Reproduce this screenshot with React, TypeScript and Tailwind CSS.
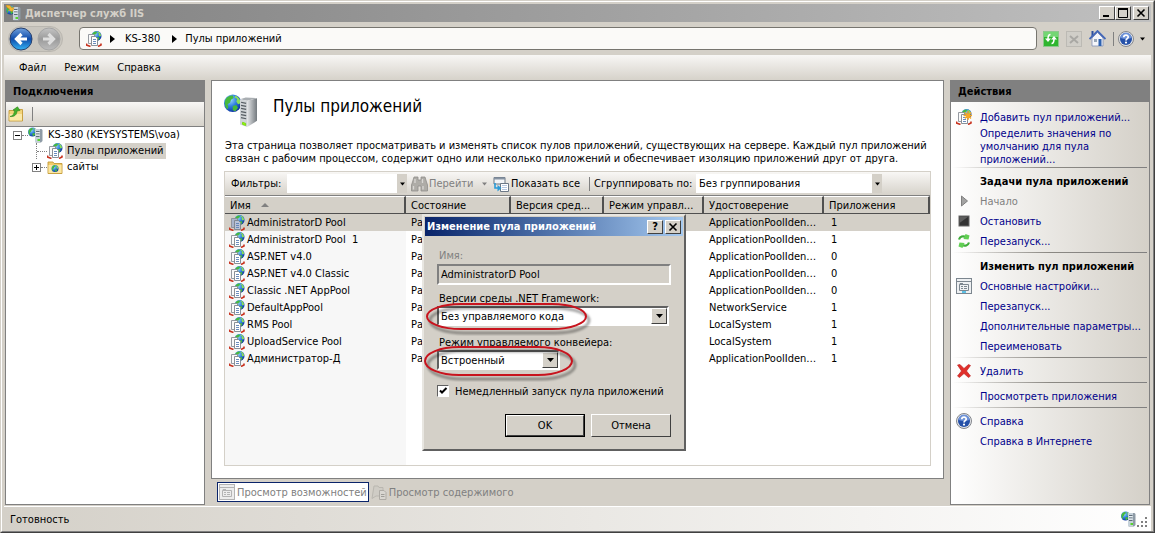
import { useId, useState } from "react";
import type { ReactNode } from "react";

const POOLS = [
  { name: "AdministratorD Pool", state: "Работает", identity: "ApplicationPoolIdentity", apps: 1 },
  { name: "AdministratorD Pool  1", state: "Работает", identity: "ApplicationPoolIdentity", apps: 1 },
  { name: "ASP.NET v4.0", state: "Работает", identity: "ApplicationPoolIdentity", apps: 0 },
  { name: "ASP.NET v4.0 Classic", state: "Работает", identity: "ApplicationPoolIdentity", apps: 0 },
  { name: "Classic .NET AppPool", state: "Работает", identity: "ApplicationPoolIdentity", apps: 0 },
  { name: "DefaultAppPool", state: "Работает", identity: "NetworkService", apps: 1 },
  { name: "RMS Pool", state: "Работает", identity: "LocalSystem", apps: 1 },
  { name: "UploadService Pool", state: "Работает", identity: "LocalSystem", apps: 1 },
  { name: "Администратор-Д", state: "Работает", identity: "ApplicationPoolIdentity", apps: 1 },
];

const COLUMNS = [
  { label: "Имя", width: "w-[181px]" },
  { label: "Состояние", width: "w-[105px]" },
  { label: "Версия сред...", width: "w-[93px]" },
  { label: "Режим управл...", width: "w-[100px]" },
  { label: "Удостоверение", width: "w-[120px]" },
  { label: "Приложения", width: "" },
];

/* ---------- icons ---------- */

function Globe({ cx, cy, r }: { cx: number; cy: number; r: number }) {
  const id = useId();
  return (
    <g>
      <radialGradient id={id} cx="35%" cy="30%" r="75%">
        <stop offset="0" stopColor="#9fdcff" />
        <stop offset="0.5" stopColor="#2f7fe0" />
        <stop offset="1" stopColor="#0b2f9c" />
      </radialGradient>
      <circle cx={cx} cy={cy} r={r} fill={`url(#${id})`} />
      <g transform={`translate(${cx} ${cy}) scale(${r / 10})`} fill="#46b93c">
        <path d="M-8-5C-6-8-3-9 0-9L1-6-2-4-3-1-6 1-5 4-6 7C-9 4-10-1-8-5Z" />
        <path d="M3-9C7-7 9-4 9 0L6 1 4-2 5-5 2-7Z" fill="#8ade5a" />
        <path d="M0 3 4 2 6 5 3 9 0 8Z" />
      </g>
    </g>
  );
}

function LargeServerIcon() {
  const id = useId();
  return (
    <svg width="33" height="33" viewBox="0 0 32 32" aria-hidden="true" className="shrink-0">
      <linearGradient id={id}>
        <stop offset="0" stopColor="#e3e5e7" />
        <stop offset="1" stopColor="#73797e" />
      </linearGradient>
      <Globe cx={8.500} cy={9} r={8.500} />
      <path d="M15.500 5 21 3.500 32 4 22.500 6.500Z" fill="#a9aeb2" />
      <path d="M22.500 6.500 32 4V26L22.500 32Z" fill={`url(#${id})`} />
      <path d="M15.500 5 22.500 6.500V32L15.500 29.500Z" fill="#d0d4d7" />
      <path d="M16.500 8 21.500 9M16.500 11 21.500 12M16.500 14 21.500 15M16.500 17 21.500 18M16.500 20 21.500 21M16.500 23 21.500 24" stroke="#565d63" strokeWidth="1.200" />
      <path d="M18 27.500 21 28.500V30.500L18 29.500Z" fill="#9dff10" stroke="#6fd400" strokeWidth="0.800" />
    </svg>
  );
}

function ServerIcon({ arrow = false }: { arrow?: boolean }) {
  return (
    <svg width="16" height="16" viewBox="0 0 16 16" aria-hidden="true" className="shrink-0">
      <Globe cx={4.500} cy={5} r={4.500} />
      <path d="M7 2H13.500L14.500 3V14L13 15.500H7.500Z" fill="#8e9ba6" />
      <path d="M7 2H12V15H7Z" fill="#c6d2da" />
      <path d="M8 4.500H11.500M8 7H11.500M8 9.500H11.500" stroke="#5d6b77" />
      <path d="M8 5.500H11.500M8 8H11.500" stroke="#f4f8fa" strokeWidth="0.800" />
      <path d="M9.500 13H12" stroke="#4bd41a" strokeWidth="1.800" />
      {arrow && <path d="M0 0 4 0.500 6 3 8 2.500 6.500 6.500 2.500 5.500 4 4.500 1 2.500Z" fill="#f2b632" stroke="#c98910" strokeWidth="0.500" />}
    </svg>
  );
}

function PoolIcon({ star = false, selected = false }: { star?: boolean; selected?: boolean }) {
  return (
    <svg width="16" height="16" viewBox="0 0 16 16" aria-hidden="true" className="shrink-0">
      <Globe cx={10.500} cy={5} r={5} />
      <path d="M0.500 12.500V14L4.500 15.500M12 15.500 15 14V12.500" fill="none" stroke="#c8321e" strokeWidth="1.600" />
      <path d="M2.500 3.500H8.500V12.500H2.500Z" fill={selected ? "#a9b4cc" : "#fafafa"} stroke="#8a8f96" strokeWidth="0.900" />
      <path d="M5.500 5.500H9.500L11.500 7.500V14.500H5.500Z" fill={selected ? "#b9c3d8" : "#fff"} stroke="#7d838b" strokeWidth="0.900" />
      <path d="M7 8.500H10M7 10.500H10M7 12.500H10" stroke="#5b80b5" strokeWidth="0.900" />
      {star && (
        <path d="M12 2V11M7.500 6.500H16.500M9 3.500 15 9.500M15 3.500 9 9.500" stroke="#f7a823" strokeWidth="1.400" />
      )}
    </svg>
  );
}

function HelpIcon() {
  return (
    <svg width="16" height="16" viewBox="0 0 16 16" aria-hidden="true" className="shrink-0">
      <circle cx="8" cy="8" r="7.500" fill="#e4e6ea" stroke="#83868c" />
      <circle cx="8" cy="8" r="6" fill="#2450a8" />
      <path d="M2.500 7A5.500 5.500 0 0 1 13.500 7Q8 9 2.500 7Z" fill="#6d92d8" />
      <path d="M5.800 6.300C5.800 3.300 10.300 3.500 10.200 6.100C10.100 7.600 8 7.700 8 9.500" fill="none" stroke="#fff" strokeWidth="1.700" />
      <circle cx="8" cy="11.600" r="1.100" fill="#fff" />
    </svg>
  );
}

function NavButton({ label, forward = false }: { label: string; forward?: boolean }) {
  const id = useId();
  return (
    <button type="button" aria-label={label} disabled={forward} className="h-6 w-6">
      <svg width="24" height="24" viewBox="0 0 24 24" aria-hidden="true">
        <linearGradient id={id} x2="0" y2="1">
          <stop offset="0" stopColor={forward ? "#c4c4c4" : "#6f9fdc"} />
          <stop offset="0.500" stopColor={forward ? "#9b9b9b" : "#0f4cab"} />
          <stop offset="1" stopColor={forward ? "#bdbdbd" : "#36b4f5"} />
        </linearGradient>
        <circle cx="12" cy="12" r="11" fill={`url(#${id})`} stroke={forward ? "#a5a5a5" : "#28406e"} />
        <path
          d="M12.500 7 7.500 12 12.500 17M8 12H18"
          fill="none"
          stroke={forward ? "#dedede" : "#fff"}
          strokeWidth="3.200"
          transform={forward ? "rotate(180 12 12)" : undefined}
        />
      </svg>
    </button>
  );
}

function RefreshIcon() {
  return (
    <svg width="16" height="16" viewBox="0 0 16 16" aria-hidden="true">
      <rect x="0.500" y="0.500" width="15" height="15" fill="#2fb52f" stroke="#8cc78c" />
      <rect x="1" y="1" width="14" height="5" fill="#74d674" />
      <path d="M7.500 3.500C5.500 3.500 5 5 5 8M8.500 12.500C10.500 12.500 11 11 11 8" fill="none" stroke="#fff" strokeWidth="1.600" />
      <path d="M2 7.500H8L5 11ZM8 8.500H14L11 5Z" fill="#fff" />
    </svg>
  );
}

function StopLoadingIcon() {
  return (
    <svg width="16" height="16" viewBox="0 0 16 16" aria-hidden="true">
      <rect x="0.500" y="0.500" width="15" height="15" fill="#d0cec8" stroke="#bcbab4" />
      <path d="M4 5 12 12M12 5 4 12" stroke="#a9a8a4" strokeWidth="2" />
    </svg>
  );
}

function HomeIcon() {
  return (
    <svg width="17" height="17" viewBox="0 0 17 17" aria-hidden="true">
      <path d="M2.500 1H4.500V6H2.500Z" fill="#2d4f9e" />
      <path d="M3 8 8.500 2.500 14 8V16H3Z" fill="#f5f6fa" stroke="#8492b5" strokeWidth="0.800" />
      <path d="M0.500 9 8.500 1 16.500 9" fill="none" stroke="#4468b8" strokeWidth="1.800" />
      <path d="M5 9H8V12H5Z" fill="#9aa8b8" />
      <path d="M9.500 9H12.500V16H9.500Z" fill="#2e62b0" />
    </svg>
  );
}

function UpFolderIcon() {
  return (
    <svg width="16" height="16" viewBox="0 0 16 16" aria-hidden="true">
      <path d="M1 4.500H7L8 3.500H14.500V15H1Z" fill="#f3d479" stroke="#c39a38" strokeWidth="0.900" />
      <path d="M1.500 8H14V14.500H1.500Z" fill="#fbe9a8" />
      <path d="M2 10.500C5 10 6.500 7.500 6.500 4.500L5 4 9.500 0.800 12 4.500 9 5C9 8.500 6.500 11 2 10.500Z" fill="#43b02c" stroke="#2d861c" strokeWidth="0.600" />
    </svg>
  );
}

function SitesIcon() {
  return (
    <svg width="16" height="16" viewBox="0 0 16 16" aria-hidden="true" className="shrink-0">
      <path d="M1 3H6L7 4.500H15V14.500H1Z" fill="#f2cd6a" stroke="#c39a38" strokeWidth="0.900" />
      <path d="M1.500 6H14.500V14H1.500Z" fill="#fae7a4" />
      <Globe cx={8} cy={9.500} r={3.500} />
    </svg>
  );
}

function BinocularsIcon() {
  return (
    <svg width="17" height="16" viewBox="0 0 17 16" aria-hidden="true" className="shrink-0">
      <path d="M3 1H7V4H10V1H14L15.500 6 16.500 9V15H10V10H7V15H0.500V9L1.500 6Z" fill="#aeaca7" stroke="#8f8e8a" strokeWidth="0.800" />
      <path d="M2.500 10V13.500M12 10V13.500M4 3V7M11.500 3V7" stroke="#d9d8d4" strokeWidth="1.300" />
    </svg>
  );
}

function ShowAllIcon() {
  return (
    <svg width="16" height="16" viewBox="0 0 16 16" aria-hidden="true" className="shrink-0">
      <path d="M1 1.500H12V8H1Z" fill="#f4f6f8" stroke="#6c7886" />
      <path d="M1 1.500H12V3.500H1Z" fill="#8693a2" />
      <path d="M7.500 7.500H15.500V15.500H7.500Z" fill="#fff" stroke="#6c7886" />
      <path d="M9.500 9.500H14M9.500 11.500H14M9.500 13.500H14" stroke="#6b8fc0" strokeDasharray="1 1" />
      <path d="M2 7V12H5" fill="none" stroke="#2b9bd8" strokeWidth="1.600" />
      <path d="M4.500 9 8.500 12 4.500 15.500Z" fill="#2b9bd8" />
    </svg>
  );
}

function RecycleIcon() {
  return (
    <svg width="16" height="16" viewBox="0 0 16 16" aria-hidden="true">
      <path d="M3 6.500C4 3.500 7 2.500 10 4" fill="none" stroke="#3fae3a" strokeWidth="2.200" />
      <path d="M9.500 1 13.500 2.500 12.500 6.500 7.500 6Z" fill="#62cf54" />
      <path d="M13 9.500C12 12.500 9 13.500 6 12" fill="none" stroke="#3fae3a" strokeWidth="2.200" />
      <path d="M6.500 15 2.500 13.500 3.500 9.500 8.500 10Z" fill="#62cf54" />
    </svg>
  );
}

function SettingsIcon({ faded = false }: { faded?: boolean }) {
  const stroke = faded ? "#b4b4b4" : "#7c868f";
  return (
    <svg width="16" height="16" viewBox="0 0 16 16" aria-hidden="true" className="shrink-0">
      <rect x="0.500" y="0.500" width="15" height="15" fill={faded ? "#ededed" : "#eef0f2"} stroke={stroke} />
      <path d="M1 3.500H15M3.500 6.500H12.500V12.500H3.500ZM4 6.500V5.500H7" fill="none" stroke={stroke} />
      <path d="M5 8.500H7M8 8.500H11M5 10.500H7M8 10.500H11" stroke={stroke} />
      {!faded && <path d="M6 14H10" stroke="#2bb0e0" strokeWidth="1.500" />}
    </svg>
  );
}

function ContentIcon() {
  return (
    <svg width="16" height="16" viewBox="0 0 16 16" aria-hidden="true" className="shrink-0">
      <path d="M1 14.500 3 2H7L8 3.500H12V12H5Z" fill="#cfccc5" stroke="#bab7b0" />
      <path d="M8.500 6.500H13L15 8.500V15.500H8.500Z" fill="#d9d7d1" stroke="#aeaba5" />
      <path d="M10 10.500H13.500M10 12.500H13.500" stroke="#a09e99" />
    </svg>
  );
}

function PlayIcon() {
  return (
    <svg width="16" height="16" viewBox="0 0 16 16" aria-hidden="true">
      <path d="M5.500 3 11.500 8 5.500 13Z" fill="#a3a3a3" stroke="#808080" />
    </svg>
  );
}

function StopIcon() {
  return (
    <svg width="16" height="16" viewBox="0 0 16 16" aria-hidden="true">
      <rect x="3" y="3" width="10" height="10" fill="#333" stroke="#666" />
      <path d="M3.500 3.500H12.500L3.500 10Z" fill="#5d5d5d" />
    </svg>
  );
}

function DeleteIcon() {
  return (
    <svg width="16" height="16" viewBox="0 0 16 16" aria-hidden="true">
      <path d="M1.500 2 4 1.500 8 5.500 12.500 1.500 14.500 2.500 10.500 8 14.500 13 12.500 14.500 8 10.500 3.500 14.500 1.500 13 5.500 8Z" fill="#e02f2a" stroke="#b81c1c" strokeWidth="0.600" />
    </svg>
  );
}

function Caret({ className = "" }: { className?: string }) {
  return (
    <svg width="7" height="4" viewBox="0 0 7 4" aria-hidden="true" className={`shrink-0 ${className}`}>
      <path d="M0 0H7L3.500 4Z" fill="currentColor" />
    </svg>
  );
}

function RightTriangle() {
  return (
    <svg width="5" height="8" viewBox="0 0 5 8" aria-hidden="true" className="shrink-0">
      <path d="M0 0 5 4 0 8Z" />
    </svg>
  );
}

/* ---------- window chrome ---------- */

const raised =
  "border border-t-white border-l-white border-r-[#404040] border-b-[#404040] bg-[#d4d0c8]";

function CaptionButton({ label, children }: { label: string; children: ReactNode }) {
  return (
    <button type="button" aria-label={label} className={`flex h-3.5 w-4 items-center justify-center ${raised}`}>
      <svg width="10" height="10" viewBox="0 0 10 10" aria-hidden="true" fill="none" stroke="#000">
        {children}
      </svg>
    </button>
  );
}

function TitleBar() {
  return (
    <header className="flex h-[18px] items-center bg-linear-to-r from-[#808080] to-[#c0c0c0] pr-0.5 pl-0.5">
      <ServerIcon arrow />
      <span className="ml-[3px] flex-1 font-bold text-[#d4d0c8]">Диспетчер служб IIS</span>
      <CaptionButton label="Свернуть">
        <path d="M1 8H7" strokeWidth="2" />
      </CaptionButton>
      <CaptionButton label="Развернуть">
        <path d="M0.500 1H9.500M0.500 1V9.500H9.500V1" />
        <path d="M0 1H10" strokeWidth="2" />
      </CaptionButton>
      <span className="w-0.5" />
      <CaptionButton label="Закрыть">
        <path d="M1.500 1.500 8.500 8.500M8.500 1.500 1.500 8.500" strokeWidth="1.600" />
      </CaptionButton>
    </header>
  );
}

function AddressBar() {
  return (
    <div className="flex h-[33px] items-center pr-1.5 pl-1">
      <div className="flex gap-1 rounded-full border border-[#bab7b0] bg-[#c9c6bf] pr-px">
        <NavButton label="Назад" />
        <NavButton label="Вперёд" forward />
      </div>
      <nav className="ml-4 flex h-[23px] flex-1 items-center rounded-sm border border-[#77756f] bg-[#fbfaf8] pl-1.5">
        <PoolIcon />
        <span className="w-2" />
        <RightTriangle />
        <button type="button" className="ml-2.5">KS-380</button>
        <span className="w-3" />
        <RightTriangle />
        <button type="button" className="ml-2">Пулы приложений</button>
      </nav>
      <div className="ml-1.5 flex items-center gap-[7px]">
        <button type="button" aria-label="Обновить"><RefreshIcon /></button>
        <button type="button" aria-label="Стоп" disabled><StopLoadingIcon /></button>
        <button type="button" aria-label="Домой"><HomeIcon /></button>
        <span className="h-3.5 w-px bg-[#808080]" />
        <button type="button" aria-label="Справка" className="-ml-[3px] flex items-center gap-1.5">
          <HelpIcon />
          <Caret className="w-[5px]" />
        </button>
      </div>
    </div>
  );
}

function MenuBar() {
  return (
    <nav className="flex h-[25px] items-center gap-[18px] bg-linear-to-b from-[#f8f7f5] to-[#d6d2ca] pl-[15px]">
      <button type="button">Файл</button>
      <button type="button">Режим</button>
      <button type="button">Справка</button>
    </nav>
  );
}

/* ---------- connections ---------- */

function PanelHeader({ children }: { children: ReactNode }) {
  return <h2 className="flex h-[22px] shrink-0 items-center bg-[#808080] pl-[7px] font-bold">{children}</h2>;
}

function TreeToggle({ open }: { open: boolean }) {
  return (
    <svg width="9" height="9" viewBox="0 0 9 9" aria-hidden="true" className="shrink-0">
      <rect x="0.500" y="0.500" width="8" height="8" fill="#fff" stroke="#808080" />
      <path d={open ? "M2 4.500H7" : "M2 4.500H7M4.500 2V7"} stroke="#000" />
    </svg>
  );
}

function Connections() {
  return (
    <aside className="flex w-[200px] flex-col border border-t-0 border-[#808080] bg-white">
      <PanelHeader>Подключения</PanelHeader>
      <div className="flex h-[25px] items-center gap-2 border-b border-[#808080] bg-linear-to-b from-[#f8f7f5] to-[#d6d2ca] pl-0.5">
        <button type="button" aria-label="Вверх"><UpFolderIcon /></button>
        <span className="h-3.5 w-px bg-[#808080]" />
      </div>
      <ul className="leading-4">
        <li>
          <div className="flex h-4 items-center pl-[7px]">
            <TreeToggle open />
            <span className="w-1.5 border-t border-dotted border-[#808080]" />
            <ServerIcon />
            <span className="pl-1">KS-380 (KEYSYSTEMS\voa)</span>
          </div>
          <ul className="pl-[26px]">
            <li className="flex h-4 items-center">
              <span className="ml-1 h-full border-l border-dotted border-[#808080]" />
              <span className="w-2.5 border-t border-dotted border-[#808080]" />
              <PoolIcon />
              <a href="#pools" className="ml-0.5 bg-[#d4d0c8] px-0.5">Пулы приложений</a>
            </li>
            <li className="flex h-4 items-center">
              <TreeToggle open={false} />
              <span className="w-1.5 border-t border-dotted border-[#808080]" />
              <SitesIcon />
              <a href="#sites" className="pl-1">сайты</a>
            </li>
          </ul>
        </li>
      </ul>
    </aside>
  );
}

/* ---------- pools ---------- */

function FilterBar() {
  return (
    <div className="flex h-6 items-center border-b border-[#808080] bg-linear-to-b from-[#f8f7f5] to-[#d6d2ca] pl-1.5">
      <label htmlFor="filter" className="w-14">Фильтры:</label>
      <input id="filter" className="h-[19px] w-[110px] bg-white px-1 outline-none" />
      <button type="button" aria-label="Список фильтров" className="flex h-[19px] w-2.5 items-center justify-center bg-[#d4d0c8]">
        <Caret className="w-[5px]" />
      </button>
      <button type="button" disabled className="ml-1 flex w-[76px] items-center text-[#808080]">
        <BinocularsIcon />
        <span className="flex-1 pl-px text-left">Перейти</span>
        <Caret className="w-[5px]" />
      </button>
      <button type="button" className="ml-1.5 flex w-24 items-center gap-0.5 whitespace-nowrap">
        <ShowAllIcon />
        Показать все
      </button>
      <span className="h-3.5 w-px bg-[#808080]" />
      <label htmlFor="group" className="ml-1 w-[102px] whitespace-nowrap">Сгруппировать по:</label>
      <div className="relative">
        <select id="group" className="block h-[19px] w-[186px] appearance-none bg-white pl-[3px] outline-none">
          <option>Без группирования</option>
        </select>
        <span className="pointer-events-none absolute inset-y-0 right-0 flex w-2.5 items-center justify-center bg-[#d4d0c8]">
          <Caret className="w-[5px]" />
        </span>
      </div>
    </div>
  );
}

function PoolTable() {
  const [selected, setSelected] = useState(0);
  return (
    <table className="w-full table-fixed border-separate border-spacing-0">
      <thead>
        <tr className="h-[18px] bg-[#d4d0c8]">
          {COLUMNS.map((col, i) => (
            <th
              key={col.label}
              className={`${col.width} border-t border-r-2 border-b border-t-white border-r-[#505050] border-b-[#505050] p-0 pl-[5px] text-left font-normal whitespace-nowrap`}
            >
              {col.label}
              {i === 0 && (
                <svg width="8" height="4" viewBox="0 0 8 4" aria-hidden="true" className="mb-0.5 ml-2.5 inline">
                  <path d="M0 4H8L4 0Z" fill="#808080" />
                </svg>
              )}
            </th>
          ))}
        </tr>
      </thead>
      <tbody>
        {POOLS.map((pool, i) => (
          <tr
            key={pool.name}
            onClick={() => setSelected(i)}
            className={i === selected ? "h-[17px] bg-[#d4d0c8]" : "h-[17px]"}
          >
            <td className="p-0 pl-1">
              <span className="flex items-center gap-0.5 whitespace-pre">
                <PoolIcon selected={i === selected} />
                {pool.name}
              </span>
            </td>
            <td className="truncate p-0 pl-[5px]">{pool.state}</td>
            <td />
            <td />
            <td className="truncate p-0 pr-1 pl-[5px]">{pool.identity}</td>
            <td className="p-0 pl-[7px]">{pool.apps}</td>
          </tr>
        ))}
      </tbody>
    </table>
  );
}

function Pools() {
  return (
    <main className="flex min-w-0 flex-1 flex-col">
      <section className="flex flex-1 flex-col border border-[#808080] bg-white px-3 pt-3 pb-3">
        <div className="flex h-[34px] items-center gap-4">
          <LargeServerIcon />
          <h1 className="pb-2 text-[17px] leading-6">Пулы приложений</h1>
        </div>
        <p className="mt-3 mb-1.5 h-[26px] pl-px leading-[13px]">
          Эта страница позволяет просматривать и изменять список пулов приложений, существующих на сервере. Каждый пул
          приложений связан с рабочим процессом, содержит одно или несколько приложений и обеспечивает изоляцию приложений друг от друга.
        </p>
        <div className="flex-1 border border-[#d4d0c8] bg-[linear-gradient(to_right,#f7f7f7_181px,#fff_181px)]">
          <FilterBar />
          <PoolTable />
        </div>
      </section>
      <div className="flex h-[26px] items-center pl-1.5 text-[#808080]">
        <button type="button" className="flex h-5 items-center gap-0.5 border border-[#0a246a] bg-white px-px">
          <SettingsIcon faded />
          Просмотр возможностей
        </button>
        <button type="button" className="flex items-center gap-0.5 pl-0.5">
          <ContentIcon />
          Просмотр содержимого
        </button>
      </div>
    </main>
  );
}

/* ---------- actions ---------- */

function Action({ icon, disabled = false, children }: { icon?: ReactNode; disabled?: boolean; children: ReactNode }) {
  return (
    <li className="flex min-h-5 items-center">
      <span className="w-6 shrink-0">{icon}</span>
      {disabled ? (
        <span className="text-[#808080]">{children}</span>
      ) : (
        <a href="#action" className="text-[#00008b]">{children}</a>
      )}
    </li>
  );
}

function ActionTitle({ children }: { children: ReactNode }) {
  return <li className="flex h-5 items-center pl-6 font-bold whitespace-nowrap">{children}</li>;
}

function Divider() {
  return <li className="-ml-1 mr-0.5 mb-[3px] mt-px h-px bg-linear-to-r from-transparent via-[#8b8883] to-[#808080]" />;
}

function Actions() {
  return (
    <aside className="flex w-[200px] flex-col border border-t-0 border-[#808080] bg-linear-to-r from-white to-[#d4d0c8]">
      <PanelHeader>Действия</PanelHeader>
      <ul className="pt-[5px] pl-[5px] leading-[13px]">
        <Action icon={<PoolIcon star />}>Добавить пул приложений...</Action>
        <Action>
          Определить значения по
          <br />
          умолчанию для пула
          <br />
          приложений...
        </Action>
        <Divider />
        <ActionTitle>Задачи пула приложений</ActionTitle>
        <Action icon={<PlayIcon />} disabled>Начало</Action>
        <Action icon={<StopIcon />}>Остановить</Action>
        <Action icon={<RecycleIcon />}>Перезапуск...</Action>
        <Divider />
        <ActionTitle>Изменить пул приложений</ActionTitle>
        <Action icon={<SettingsIcon />}>Основные настройки...</Action>
        <Action>Перезапуск...</Action>
        <Action>Дополнительные параметры...</Action>
        <Action>Переименовать</Action>
        <Divider />
        <Action icon={<DeleteIcon />}>Удалить</Action>
        <Divider />
        <Action>Просмотреть приложения</Action>
        <Divider />
        <Action icon={<HelpIcon />}>Справка</Action>
        <Action>Справка в Интернете</Action>
      </ul>
    </aside>
  );
}

/* ---------- dialog ---------- */

const sunken = "border-2 border-t-[#606060] border-l-[#606060] border-r-white border-b-white";

function Combo({ id, width, value }: { id: string; width: string; value: string }) {
  return (
    <div className={`relative ${width}`}>
      <select id={id} className={`block h-5 w-full appearance-none bg-white pl-0.5 outline-none ${sunken}`}>
        <option>{value}</option>
      </select>
      <span className={`pointer-events-none absolute top-0.5 right-0.5 bottom-0.5 flex w-4 items-center justify-center ${raised}`}>
        <Caret />
      </span>
    </div>
  );
}

// red oval with a soft shadow that points at a field
function Marker({ className, width, height }: { className: string; width: number; height: number }) {
  const id = useId();
  return (
    <svg
      width={width + 8}
      height={height + 8}
      aria-hidden="true"
      className={`pointer-events-none absolute ${className}`}
    >
      <filter id={id}>
        <feGaussianBlur stdDeviation="1.2" />
      </filter>
      <rect x="4" y="5" width={width - 2} height={height - 2} rx="34" ry={height / 2 - 1} fill="none" stroke="#000" strokeOpacity="0.350" strokeWidth="3" filter={`url(#${id})`} />
      <rect x="1" y="1" width={width - 2} height={height - 2} rx="34" ry={height / 2 - 1} fill="none" stroke="#c8141e" strokeWidth="2" />
    </svg>
  );
}

function EditPoolDialog() {
  const [autoStart, setAutoStart] = useState(true);
  return (
    <div
      role="dialog"
      aria-labelledby="dialog-title"
      className="absolute top-[213px] left-[421px] w-[264px] border-2 border-t-[#e8e6e1] border-l-[#e8e6e1] border-r-[#606060] border-b-[#606060] bg-[#d4d0c8] p-px pb-3"
    >
      <div className="flex h-[19px] items-center bg-linear-to-r from-[#0a246a] to-[#a6caf0] pr-0.5 pl-0.5">
        <h2 id="dialog-title" className="flex-1 font-bold text-white">Изменение пула приложений</h2>
        <button type="button" aria-label="Справка" className={`flex h-3.5 w-4 items-center justify-center font-bold ${raised}`}>?</button>
        <span className="w-0.5" />
        <CaptionButton label="Закрыть">
          <path d="M1.500 1.500 8.500 8.500M8.500 1.500 1.500 8.500" strokeWidth="1.600" />
        </CaptionButton>
      </div>
      <form className="px-3 pt-2.5" onSubmit={(e) => e.preventDefault()}>
        <label htmlFor="pool-name" className="flex h-[18px] items-center pl-0.5 text-[#808080]">Имя:</label>
        <input
          id="pool-name"
          readOnly
          value="AdministratorD Pool"
          className="block h-[21px] w-full border-2 border-t-[#808080] border-l-[#808080] border-r-white border-b-white bg-[#d4d0c8] pl-0.5 outline-none"
        />
        <label htmlFor="runtime" className="mt-[5px] flex h-4 items-center pl-0.5">Версии среды .NET Framework:</label>
        <Combo id="runtime" width="w-[232px]" value="Без управляемого кода" />
        <label htmlFor="pipeline" className="mt-2 flex h-4 items-center pl-0.5">Режим управляемого конвейера:</label>
        <Combo id="pipeline" width="w-[123px]" value="Встроенный" />
        <label className="mt-3 flex h-[18px] items-center gap-1.5">
          <span className="relative h-3 w-3">
            <input
              type="checkbox"
              checked={autoStart}
              onChange={(e) => setAutoStart(e.target.checked)}
              className="block h-3 w-3 appearance-none border border-t-[#606060] border-l-[#606060] border-r-white border-b-white bg-white"
            />
            {autoStart && (
              <svg width="12" height="12" viewBox="0 0 12 12" aria-hidden="true" className="pointer-events-none absolute inset-0">
                <path d="M3 5.500 5 7.500 9.500 3" fill="none" stroke="#000" strokeWidth="2" />
              </svg>
            )}
          </span>
          Немедленный запуск пула приложений
        </label>
        <div className="mt-3.5 flex justify-end gap-1.5">
          <button type="submit" className="h-[23px] w-20 border border-black">
            <span className={`flex h-full items-center justify-center ${raised}`}>OK</span>
          </button>
          <button type="button" className={`h-[23px] w-20 ${raised}`}>Отмена</button>
        </div>
      </form>
      <Marker className="top-[87px] left-[2px]" width={161} height={27} />
      <Marker className="top-[130px] left-0" width={149} height={30} />
    </div>
  );
}

function StatusBar() {
  return (
    <footer className="mt-px flex h-[25px] items-center border-t border-white bg-linear-to-r from-[#d4d0c8] to-white pr-1 pl-1.5">
      <span className="flex-1">Готовность</span>
      <ServerIcon />
      <svg width="10" height="10" viewBox="0 0 10 10" aria-hidden="true" fill="#808080" className="mb-1 self-end">
        <path d="M0 8H2V10H0ZM4 8H6V10H4ZM8 8H10V10H8ZM4 4H6V6H4ZM8 4H10V6H8ZM8 0H10V2H8Z" />
      </svg>
    </footer>
  );
}

export default function App() {
  return (
    <div className="relative flex min-h-screen flex-col border border-[#d4d0c8] border-r-[#404040] border-b-[#404040] bg-[#d4d0c8] font-['DejaVu_Sans_Condensed','DejaVu_Sans',sans-serif] text-[11px] leading-[13px] text-black">
      <div className="flex flex-1 flex-col border border-white border-r-[#808080] border-b-[#808080] px-0.5 pt-0.5">
        <TitleBar />
        <AddressBar />
        <MenuBar />
        <div className="flex flex-1 gap-1.5 px-px">
          <Connections />
          <Pools />
          <Actions />
        </div>
        <StatusBar />
      </div>
      <EditPoolDialog />
    </div>
  );
}
